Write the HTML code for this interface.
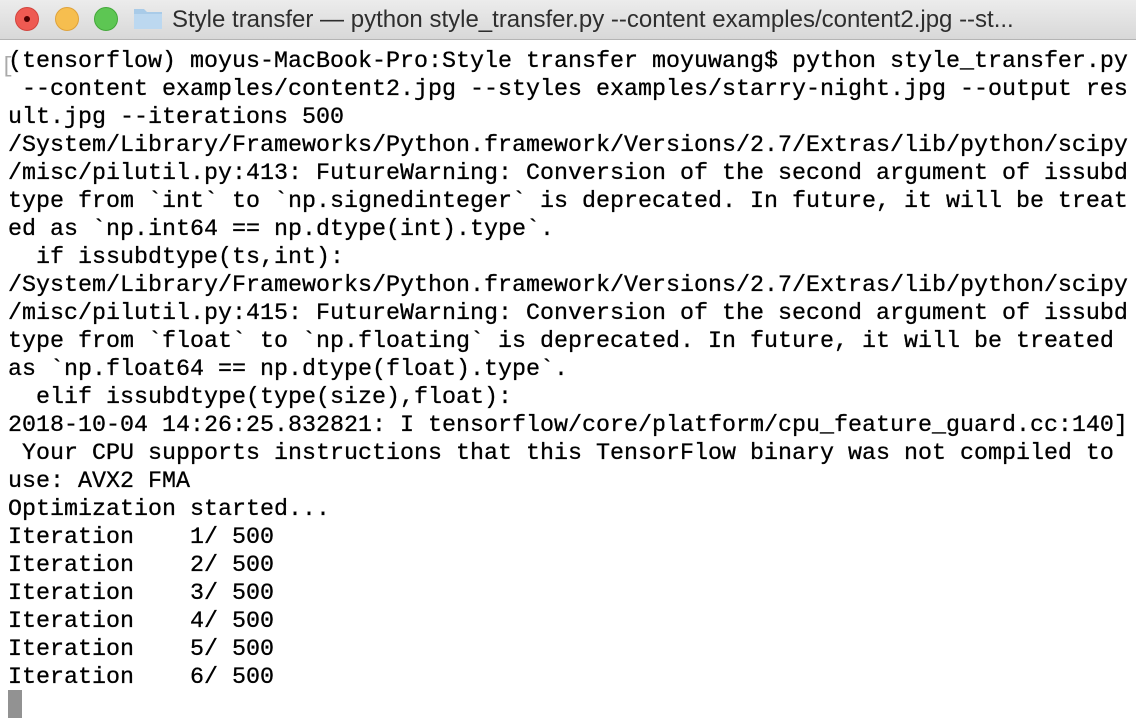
<!DOCTYPE html>
<html><head><meta charset="utf-8"><style>
html,body{margin:0;padding:0;width:1136px;height:724px;overflow:hidden;background:#fff}
.tb{position:absolute;left:0;top:0;width:1136px;height:39px;background:linear-gradient(#ececec,#d8d8d8);border-bottom:1px solid #b4b4b4}
.dot{position:absolute;top:7px;width:24px;height:24px;border-radius:50%;box-sizing:border-box}
.title{position:absolute;left:172px;top:6px;font:24px "Liberation Sans",sans-serif;color:#2e2e2e;white-space:nowrap}
pre{position:absolute;left:8px;top:48px;margin:0;font:23.33px/28px "Liberation Mono",monospace;color:#000;white-space:pre;-webkit-text-stroke:0.3px #000}
.cur{position:absolute;left:8px;top:690px;width:14px;height:28px;background:#929292}
.br{position:absolute;left:1px;top:54px;font:22px "Liberation Mono",monospace;color:#aaa}
</style></head><body>
<div class="tb">
<div class="dot" style="left:15px;background:#ee5a52;border:1px solid #d2443d"><div style="position:absolute;left:8px;top:8px;width:6px;height:6px;border-radius:50%;background:#4d0000"></div></div>
<div class="dot" style="left:55px;background:#f6be4f;border:1px solid #dfa23a"></div>
<div class="dot" style="left:94px;background:#5dc653;border:1px solid #43a83a"></div>
<svg style="position:absolute;left:133px;top:6px" width="30" height="24"><path d="M1 3h10l3 3h15v17H1z" fill="#a9cbe8"/><path d="M1 8h28v15H1z" fill="#bcd8f0"/></svg>
<div class="title">Style transfer — python style_transfer.py --content examples/content2.jpg --st...</div>
</div>
<div class="br">[</div>
<pre>(tensorflow) moyus-MacBook-Pro:Style transfer moyuwang$ python style_transfer.py
 --content examples/content2.jpg --styles examples/starry-night.jpg --output res
ult.jpg --iterations 500
/System/Library/Frameworks/Python.framework/Versions/2.7/Extras/lib/python/scipy
/misc/pilutil.py:413: FutureWarning: Conversion of the second argument of issubd
type from `int` to `np.signedinteger` is deprecated. In future, it will be treat
ed as `np.int64 == np.dtype(int).type`.
  if issubdtype(ts,int):
/System/Library/Frameworks/Python.framework/Versions/2.7/Extras/lib/python/scipy
/misc/pilutil.py:415: FutureWarning: Conversion of the second argument of issubd
type from `float` to `np.floating` is deprecated. In future, it will be treated
as `np.float64 == np.dtype(float).type`.
  elif issubdtype(type(size),float):
2018-10-04 14:26:25.832821: I tensorflow/core/platform/cpu_feature_guard.cc:140]
 Your CPU supports instructions that this TensorFlow binary was not compiled to
use: AVX2 FMA
Optimization started...
Iteration    1/ 500
Iteration    2/ 500
Iteration    3/ 500
Iteration    4/ 500
Iteration    5/ 500
Iteration    6/ 500</pre>
<div class="cur"></div>
</body></html>
